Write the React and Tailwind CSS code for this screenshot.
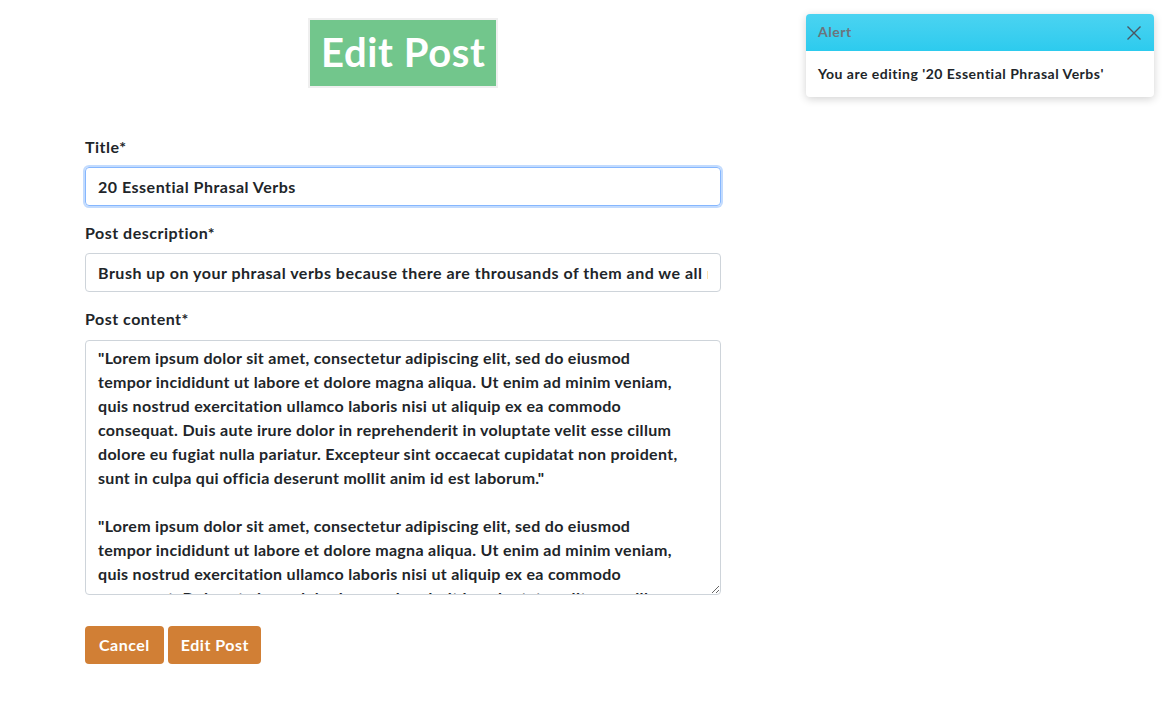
import React from 'react';

const para = [
  '"Lorem ipsum dolor sit amet, consectetur adipiscing elit, sed do eiusmod',
  'tempor incididunt ut labore et dolore magna aliqua. Ut enim ad minim veniam,',
  'quis nostrud exercitation ullamco laboris nisi ut aliquip ex ea commodo',
  'consequat. Duis aute irure dolor in reprehenderit in voluptate velit esse cillum',
  'dolore eu fugiat nulla pariatur. Excepteur sint occaecat cupidatat non proident,',
  'sunt in culpa qui officia deserunt mollit anim id est laborum."',
].join('\n');

const content = `${para}\n\n${para}\n\n${para}`;

export default function App() {
  return (
    <div className="relative min-h-[715px] bg-white text-[#212529] font-['Lato',sans-serif] font-bold tracking-[0.5px]">
      {/* header */}
      <div className="pt-[18px] pl-[308px]">
        <h1 className="inline-block border-2 border-[#efefef] bg-[#72c68c] px-[11px] h-[70px] leading-[64px] text-[40px] font-bold text-white tracking-[0.6px]">
          Edit Post
        </h1>
      </div>

      {/* form */}
      <form className="ml-[85px] mt-[47px] w-[636px]">
        <label className="block text-[16px] leading-6 mb-[8px]">Title*</label>
        <input
          defaultValue="20 Essential Phrasal Verbs"
          className="block w-full h-[39px] rounded-[4px] border border-[#86b7fe] px-3 text-[16px] font-bold tracking-[0.5px] outline-none shadow-[0_0_0_2px_rgba(13,110,253,0.25)]"
        />

        <label className="block text-[16px] leading-6 mt-[15px] mb-[8px]">Post description*</label>
        <input
          defaultValue="Brush up on your phrasal verbs because there are throusands of them and we all need to know the most common ones."
          className="block w-full h-[39px] rounded-[4px] border border-[#ced4da] px-3 text-[16px] font-bold tracking-[0.5px] outline-none"
        />

        <label className="block text-[16px] leading-6 mt-[15px] mb-[9px]">Post content*</label>
        <textarea
          defaultValue={content}
          className="block w-full h-[255px] rounded-[4px] border border-[#ced4da] pl-3 pr-[6px] pt-[5px] pb-0 text-[16px] leading-6 font-bold tracking-[0.3px] outline-none"
        />

        <div className="flex gap-[4px] mt-[31px]">
          <button type="button" className="h-[38px] px-[14px] rounded-[4px] bg-[#d17f35] text-white text-[16px] font-bold tracking-[0.5px]">
            Cancel
          </button>
          <button type="button" className="h-[38px] pl-[13px] pr-[12px] rounded-[4px] bg-[#d17f35] text-white text-[16px] font-bold tracking-[0.5px]">
            Edit Post
          </button>
        </div>
      </form>

      {/* alert toast */}
      <div className="absolute top-[14px] left-[806px] w-[348px] rounded-[4px] bg-white shadow-[0_2px_8px_rgba(0,0,0,0.18)] overflow-hidden">
        <div className="flex items-center justify-between h-[37px] px-3 bg-gradient-to-b from-[#4ad3f1] to-[#2ccbee]">
          <span className="text-[14px] leading-5 text-[#6c757d] -mt-[2px]">Alert</span>
          <svg width="16" height="16" viewBox="0 0 16 16" className="text-[#4b5560]">
            <path d="M1.5 1.5l13 13M14.5 1.5l-13 13" stroke="currentColor" strokeWidth="1.4" fill="none" />
          </svg>
        </div>
        <div className="px-3 py-[14px] text-[14px] leading-[18px]">You are editing '20 Essential Phrasal Verbs'</div>
      </div>
    </div>
  );
}
